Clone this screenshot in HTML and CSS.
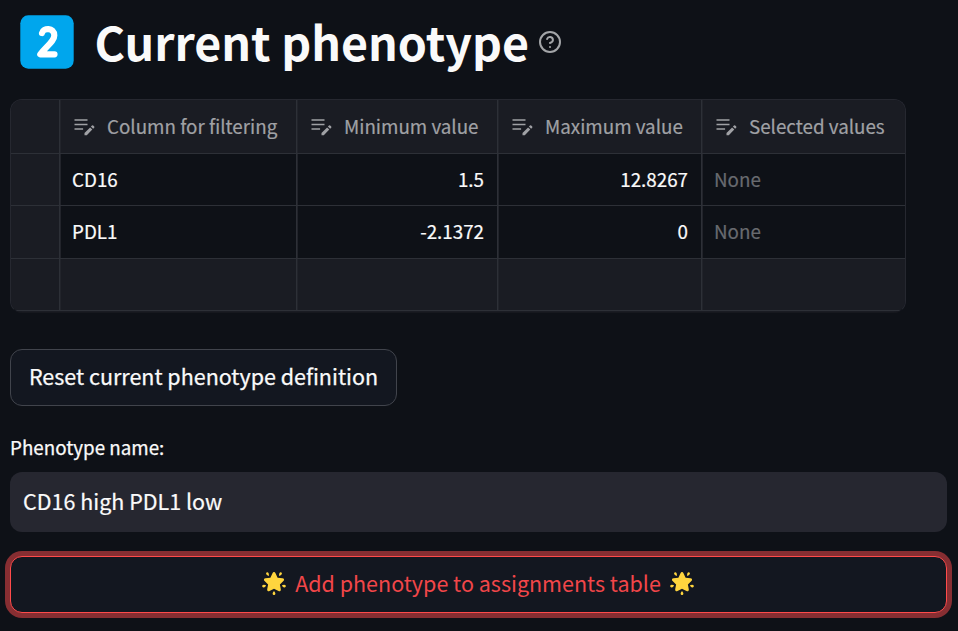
FILE: index.html
```html
<!DOCTYPE html>
<html lang="en">
<head>
<meta charset="utf-8">
<title>Current phenotype</title>
<link rel="stylesheet" href="styles.css">
</head>
<body>
<svg class="defs" aria-hidden="true">
  <symbol id="edit" viewBox="0 0 22 18">
    <path d="M1.500 2h13M1.500 6.500h13M1.500 11h8.600" stroke="currentColor" stroke-width="1.500" fill="none"/>
    <path d="M11.500 17.200v-2.300l5.600-5.500 2.200 2.200-5.500 5.600zM17.900 8.600l1.100-1.100q.6-.5 1.200 0l1 1q.5.6 0 1.200l-1.100 1.100z" fill="currentColor"/>
  </symbol>
  <symbol id="star" viewBox="0 0 24 24">
    <g fill="#ffd53e">
      <path d="M12 1.100q1 0 1.500 1.200l2.100 4.400 4.900.6q1.200.2 1.500 1 .3.9-.6 1.700l-3.500 3.400.9 4.900q.2 1.200-.5 1.700-.7.6-1.800 0L12 17.700 7.500 20q-1.100.6-1.800 0-.7-.5-.5-1.700l.9-4.900L2.600 10q-.9-.8-.6-1.700.3-.8 1.500-1l4.900-.6 2.100-4.400Q11 1.100 12 1.100z"/>
      <path d="M4 2.400q.7-1.800 2.100-.8 1 .8.800 3.300Q4.200 4.300 4 2.400zM20 2.400q-.7-1.800-2.100-.8-1 .8-.8 3.300 2.700-.6 2.900-2.500zM4.100 14.200Q1 13.300.3 14.600q-.5 1.600 1.100 2 1.800.2 2.700-2.400zM19.900 14.200q3.100-.9 3.800.4.500 1.600-1.100 2-1.800.2-2.700-2.400zM12 19.900q-2 2.300-1.100 3.500 1.100 1.100 2.200 0 .9-1.200-1.100-3.500z"/>
    </g>
  </symbol>
</svg>
<main class="page">
  <header class="heading">
    <svg class="keycap" viewBox="0 0 54 54" role="img" aria-label="2">
      <rect x=".3" y=".3" width="53.400" height="53.400" rx="8" fill="#00a6ed"/>
      <path d="M22 18C23 13 34.300 12 34.300 20.500C34.300 26.500 26 31.500 20.300 39.300H34.500" fill="none" stroke="#fff" stroke-width="6.200" stroke-linecap="round" stroke-linejoin="round"/>
    </svg>
    <h1 class="title">Current phenotype</h1>
    <svg class="help" viewBox="1 1 22 22" fill="none" stroke="#a3a5a8" stroke-width="2" stroke-linecap="round" stroke-linejoin="round">
      <circle cx="12" cy="12" r="10"/><path d="M9.090 9a3 3 0 0 1 5.830 1c0 2-3 3-3 3M12 17h.01"/>
    </svg>
  </header>

  <div class="grid">
    <div class="cell head"></div>
    <div class="cell head"><svg class="edit"><use href="#edit"/></svg><span>Column for filtering</span></div>
    <div class="cell head"><svg class="edit"><use href="#edit"/></svg><span>Minimum value</span></div>
    <div class="cell head"><svg class="edit"><use href="#edit"/></svg><span>Maximum value</span></div>
    <div class="cell head"><svg class="edit"><use href="#edit"/></svg><span>Selected values</span></div>
    <div class="cell shade"></div>
    <div class="cell"><span>CD16</span></div>
    <div class="cell num"><span>1.5</span></div>
    <div class="cell num"><span>12.8267</span></div>
    <div class="cell none"><span>None</span></div>
    <div class="cell shade"></div>
    <div class="cell low"><span>PDL1</span></div>
    <div class="cell num low"><span>-2.1372</span></div>
    <div class="cell num low"><span>0</span></div>
    <div class="cell none low"><span>None</span></div>
    <div class="cell shade"></div>
    <div class="cell shade"></div>
    <div class="cell shade"></div>
    <div class="cell shade"></div>
    <div class="cell shade"></div>
  </div>

  <button class="reset"><span>Reset current phenotype definition</span></button>
  <label class="label" for="name"><span>Phenotype name:</span></label>
  <input class="field" id="name" type="text" value="CD16 high PDL1 low">
  <button class="add">
    <svg class="star"><use href="#star"/></svg>
    <span>Add phenotype to assignments table</span>
    <svg class="star"><use href="#star"/></svg>
  </button>
</main>
</body>
</html>
```

FILE: styles.css
```css
* { box-sizing: border-box; }
body {
  margin: 0;
  min-height: 100vh;
  background: #0e1117;
  color: #fafafa;
  font-family: "Noto Sans CJK SC", "Noto Sans", sans-serif;
}
.defs { position: absolute; width: 0; height: 0; }
.page { display: flex; flex-direction: column; height: 631px; padding: 15px 11px 0 10px; }
.page > * { flex: none; }
.heading { display: flex; align-items: flex-start; height: 84px; padding-left: 10px; }
.keycap { width: 54px; height: 54px; flex: none; }
.title { margin: -2px 0 0 20.500px; font-size: 46.550px; line-height: 56px; font-weight: 700; white-space: nowrap; }
.help { width: 22px; height: 22px; margin: 16px 0 0 10px; flex: none; }

.grid {
  display: grid;
  grid-template-columns: 49px 237px 201px 204px 203px;
  grid-template-rows: 54px 52px 53px 52px;
  width: 896px;
  height: 214px;
  border: 1px solid #262830;
  border-bottom-color: #16181e;
  border-radius: 12px;
  overflow: hidden;
  background: #1a1c23;
  font-size: 18.800px;
}
.cell {
  display: flex;
  align-items: center;
  padding: 0 13px 2px 12px;
  border-right: 1px solid #2d3037;
  border-bottom: 1px solid #2d3037;
  box-shadow: inset 1px 0 #22242b;
  background: #0e1117;
  color: #fafafa;
  white-space: nowrap;
  -webkit-text-stroke: .2px;
}
.cell:nth-child(5n) { border-right: 0; }
.cell:nth-child(5n + 1) { box-shadow: none; }
.low { padding-bottom: 4px; }
.head, .shade { background: #1a1c23; }
.head { color: #a0a1a5; padding-left: 13px; }
.edit { width: 22px; height: 18px; margin: 2px 12px 0 0; flex: none; }
.num { justify-content: flex-end; }
.none { color: #686a6f; }

button { font: inherit; color: inherit; display: flex; align-items: center; justify-content: center; padding: 0; }
.reset {
  width: 387px;
  height: 57px;
  margin-top: 36px;
  padding-bottom: 4px;
  border: 1px solid #41444c;
  border-radius: 12px;
  background: #131720;
  font-size: 21.500px;
  -webkit-text-stroke: .25px;
}
.label { margin-top: 27px; height: 28px; line-height: 28px; font-size: 18.800px; -webkit-text-stroke: .25px; }
.field {
  height: 60px;
  margin-top: 11px;
  padding: 0 13px 4px;
  border: 0;
  border-radius: 12px;
  background: #262730;
  color: #fafafa;
  font: inherit;
  font-size: 21.500px;
  -webkit-text-stroke: .2px;
}
.add {
  height: 57px;
  margin-top: 24px;
  padding: 0 1px 4px 0;
  gap: 9px;
  border: 1px solid #ff4b4b;
  border-radius: 12px;
  box-shadow: 0 0 0 5px #872e32;
  background: #131720;
  color: #f24649;
  font-size: 21.500px;
}
.star { width: 24px; height: 24px; flex: none; }
```
